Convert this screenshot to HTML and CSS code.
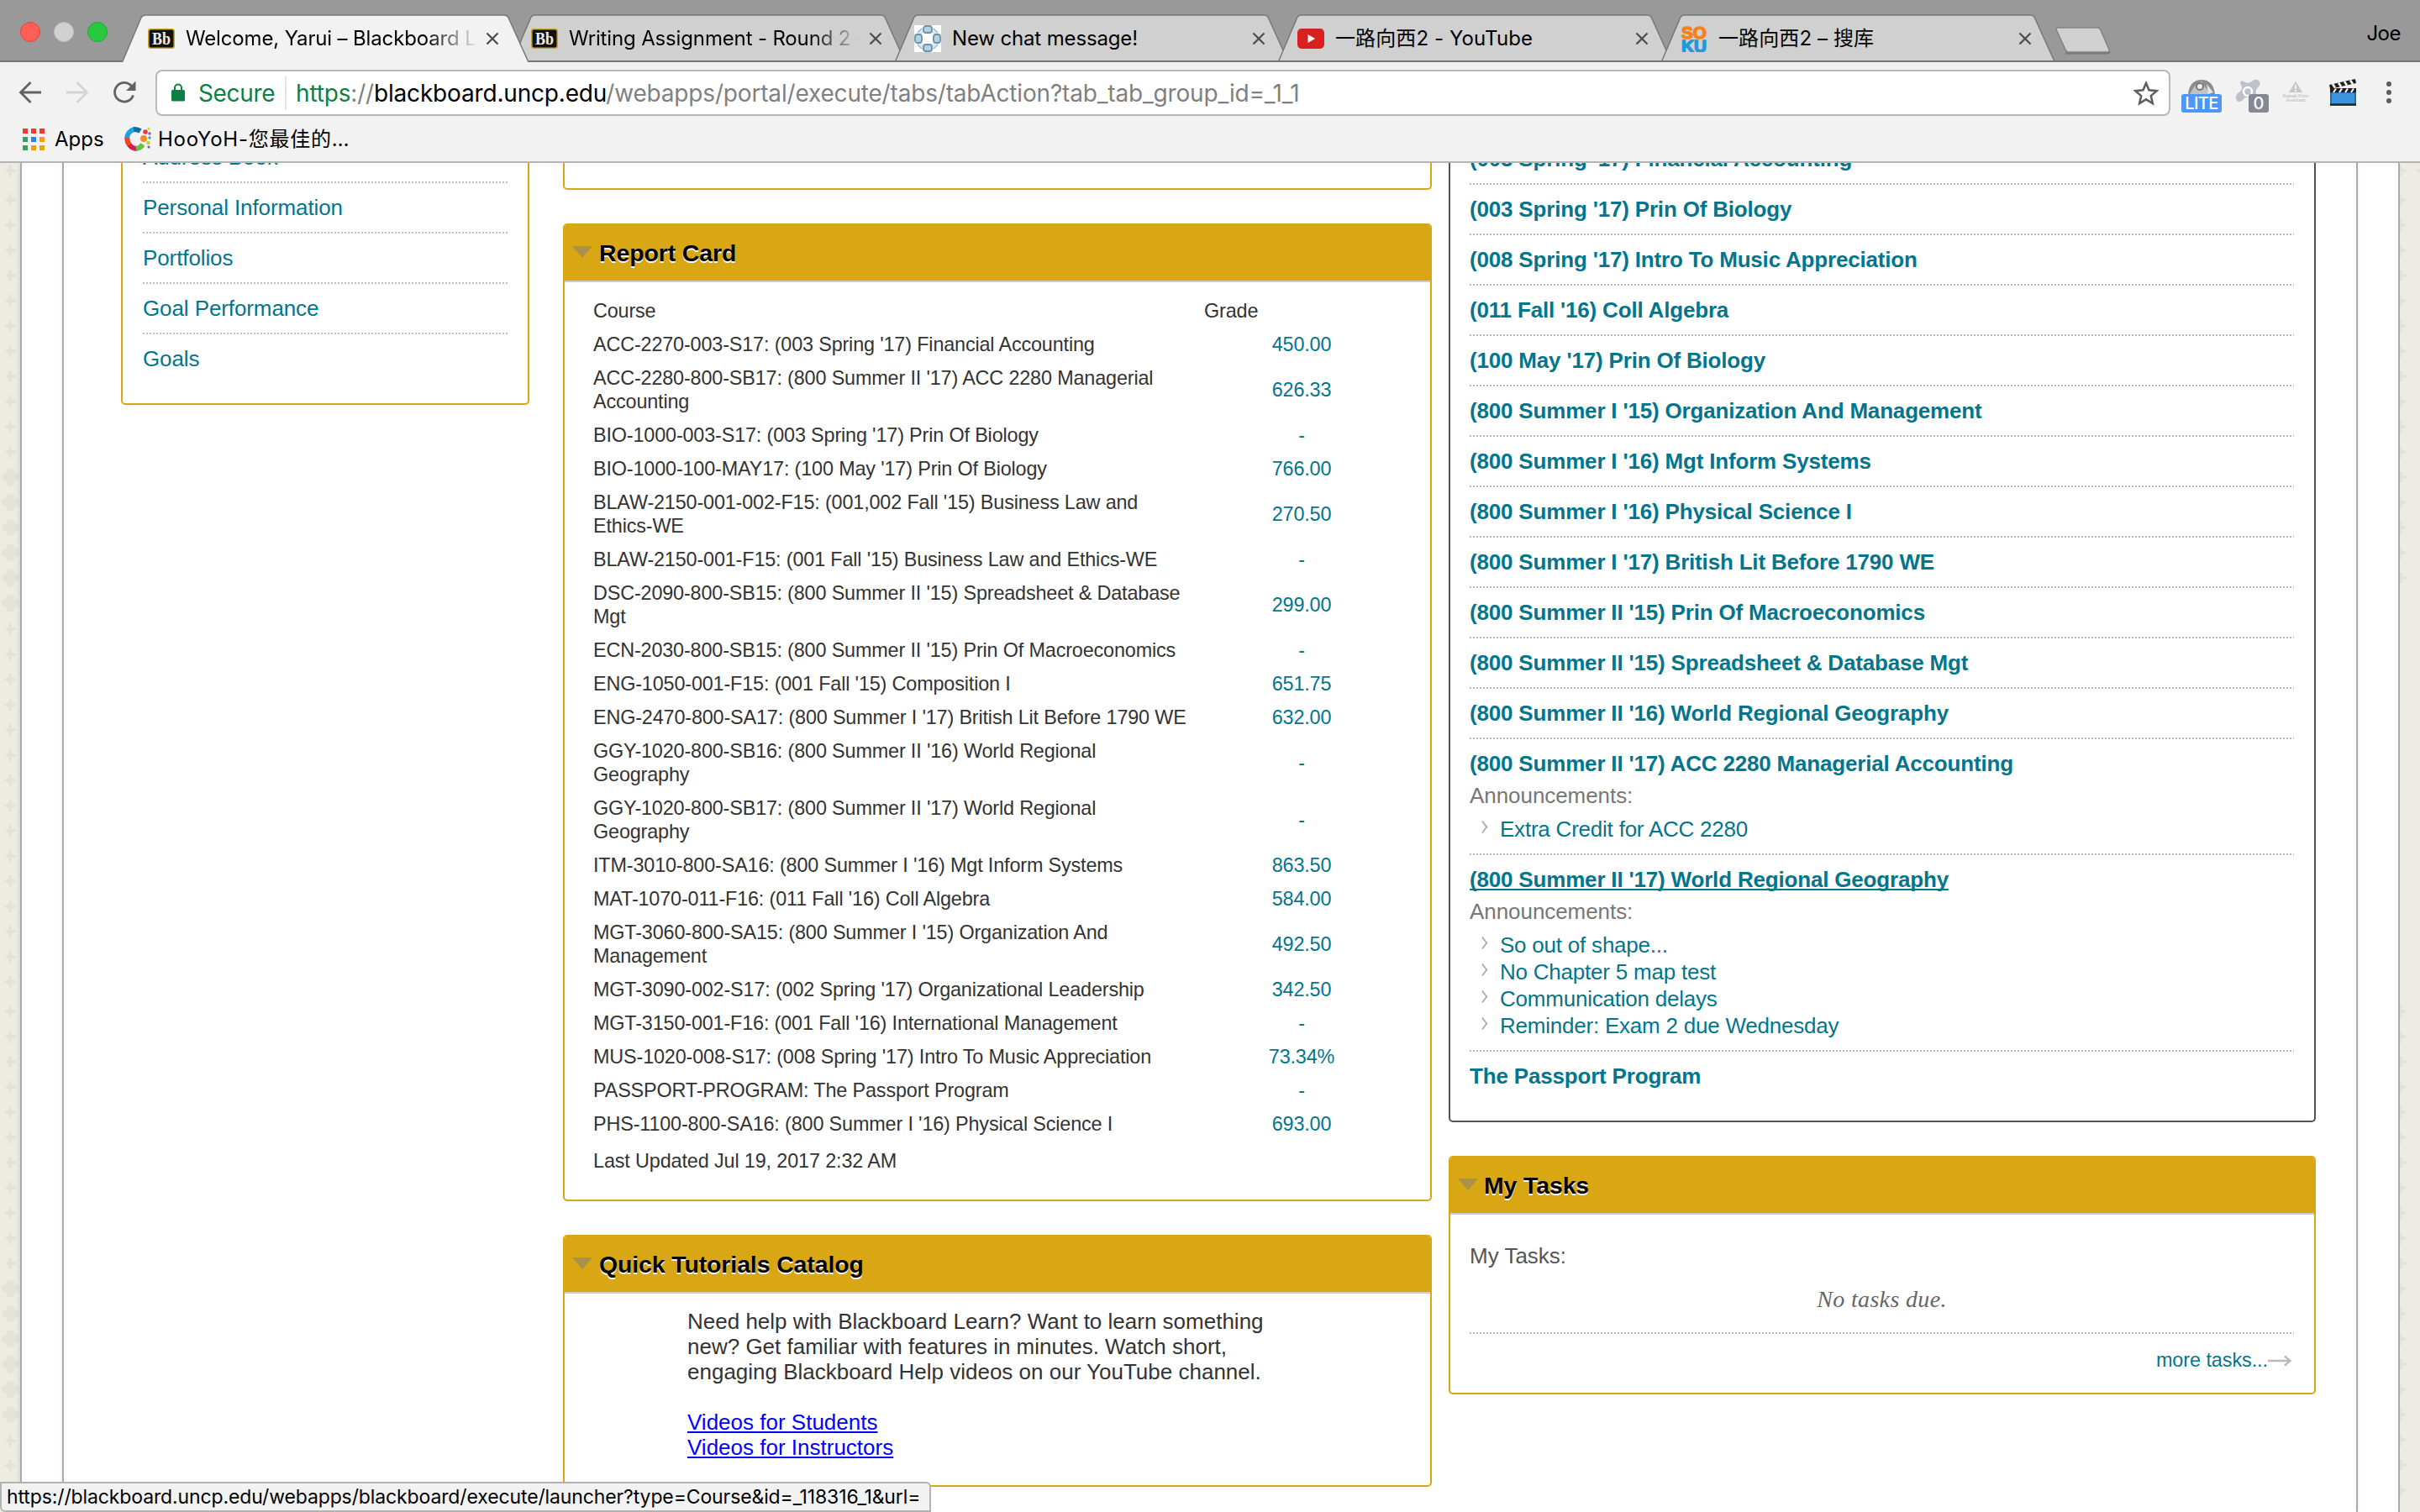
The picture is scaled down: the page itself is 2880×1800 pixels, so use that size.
FILE: index.html
```html
<!DOCTYPE html>
<html lang="en">
<head>
<meta charset="utf-8">
<title>Welcome, Yarui – Blackboard Learn</title>
<link rel="stylesheet" href="styles.css">
</head>
<body>
<svg class="defs" width="0" height="0" aria-hidden="true">
  <defs>
    <symbol id="tab-shape" viewBox="0 0 485 57">
      <path d="M0.5 57 L23 4 Q24.5 1 28 1 L455 1 Q458.500 1 460 4 L484 57"/>
    </symbol>
    <symbol id="close" viewBox="0 0 16 16"><path d="M1.500 1.500 L14.500 14.500 M14.500 1.500 L1.500 14.500" stroke="#4c4c4c" stroke-width="2.200" fill="none"/></symbol>
    <symbol id="bb" viewBox="0 0 32 24">
      <rect x="0.800" y="0.800" width="30.400" height="22.400" rx="2.500" fill="#111" stroke="#c9a227" stroke-width="1.600"/>
      <text x="16" y="18.500" text-anchor="middle" font-family="Liberation Serif, serif" font-size="20" font-weight="bold" fill="#eee" textLength="22" lengthAdjust="spacingAndGlyphs">Bb</text>
    </symbol>
    <symbol id="plus" viewBox="-8 -8 16 16"><path d="M-8 0 L-4 -2 L-1.800 -2 L-1.800 -4 Q-2.500 -6 0 -7.500 Q2.500 -6 1.800 -4 L1.800 -2 L4 -2 L8 0 L4 2 L1.800 2 L1.800 4 Q2.500 6 0 7.500 Q-2.500 6 -1.800 4 L-1.800 2 L-4 2 Z" fill="#e4e1d8"/></symbol>
    <pattern id="pluses" width="25" height="30" patternUnits="userSpaceOnUse"><use href="#plus" x="4.500" y="7" width="16" height="16"/></pattern>
    <pattern id="clovers" width="25" height="30" patternUnits="userSpaceOnUse">
      <g fill="#e5e2d9"><circle cx="7" cy="15" r="5"/><circle cx="18.500" cy="15" r="5"/><circle cx="12.700" cy="9.500" r="5"/><circle cx="12.700" cy="20.500" r="5"/><rect x="7" y="10" width="11.500" height="10"/></g>
    </pattern>
    <symbol id="caret" viewBox="0 0 24 14"><path d="M0 0 H24 L12 14 Z" fill="#a99149"/></symbol>
  </defs>
</svg>

<header class="chrome">
  <div class="tabstrip">
    <div class="lights"><i class="light red"></i><i class="light grey"></i><i class="light green"></i></div>
    <nav class="tabs">
      <div class="tab active">
        <svg class="shape"><use href="#tab-shape"/></svg>
        <svg class="fav" viewBox="0 0 32 24"><use href="#bb"/></svg>
        <span class="title fade">Welcome, Yarui – Blackboard Learn</span>
        <svg class="x"><use href="#close"/></svg>
      </div>
      <div class="tab">
        <svg class="shape"><use href="#tab-shape"/></svg>
        <svg class="fav" viewBox="0 0 32 24"><use href="#bb"/></svg>
        <span class="title fade">Writing Assignment - Round 2 -</span>
        <svg class="x"><use href="#close"/></svg>
      </div>
      <div class="tab">
        <svg class="shape"><use href="#tab-shape"/></svg>
        <svg class="fav tall" viewBox="0 0 32 32">
          <rect width="32" height="32" fill="#fff"/>
          <circle cx="16" cy="16" r="11.500" fill="none" stroke="#dcebf2" stroke-width="6"/>
          <g fill="#b5d3e2" stroke="#6b93aa" stroke-width="1.800"><rect x="11" y="1" width="10" height="8" rx="3"/><rect x="11" y="23" width="10" height="8" rx="3"/><rect x="1" y="11" width="8" height="10" rx="3"/><rect x="23" y="11" width="8" height="10" rx="3"/></g>
          <g fill="none" stroke="#a4bccb" stroke-width="1.500"><path d="M4 9 L9 4 M23 4 L28 9 M4 23 L9 28 M23 28 L28 23"/></g>
        </svg>
        <span class="title">New chat message!</span>
        <svg class="x"><use href="#close"/></svg>
      </div>
      <div class="tab">
        <svg class="shape"><use href="#tab-shape"/></svg>
        <svg class="fav" viewBox="0 0 32 24"><rect width="32" height="24" rx="5" fill="#d8201f"/><path d="M12.500 7 L21 12 L12.500 17 Z" fill="#fff"/></svg>
        <span class="title cjk">一路向西2 - YouTube</span>
        <svg class="x"><use href="#close"/></svg>
      </div>
      <div class="tab">
        <svg class="shape"><use href="#tab-shape"/></svg>
        <svg class="fav tall" viewBox="0 0 32 32" font-family="Liberation Sans, sans-serif" font-weight="bold" font-size="21" stroke-width="1.500">
          <text x="1" y="15.500" fill="#f5821f" stroke="#f5821f" textLength="30" lengthAdjust="spacingAndGlyphs">SO</text>
          <text x="1" y="31.500" fill="#1f9ad6" stroke="#1f9ad6" textLength="30" lengthAdjust="spacingAndGlyphs">KU</text>
        </svg>
        <span class="title cjk">一路向西2 – 搜库</span>
        <svg class="x"><use href="#close"/></svg>
      </div>
    </nav>
    <svg class="newtab" viewBox="0 0 66 33"><path d="M12 31.500 H62 Q65 31.500 64 29" stroke="#777" stroke-width="2" fill="none"/><path d="M3 1 H50 Q53 1 54 4 L64 27 Q65 30 61 30 H16 Q13 30 12 27 L1.500 4 Q0.500 1 3 1 Z" fill="#d0d0d0" stroke="#828282" stroke-width="1.500"/></svg>
    <span class="profile">Joe</span>
  </div>

  <div class="toolbar">
    <div class="navbtns">
      <svg width="28" height="28" viewBox="0 0 28 28" fill="none" stroke="#636363" stroke-width="2.800"><path d="M27 14 H3 M14.500 2 L2.500 14 L14.500 26"/></svg>
      <svg width="28" height="28" viewBox="0 0 28 28" fill="none" stroke="#d4d4d4" stroke-width="2.800"><path d="M1 14 H25 M13.500 2 L25.500 14 L13.500 26"/></svg>
      <svg width="28" height="28" viewBox="0 0 28 28" fill="none" stroke="#636363" stroke-width="2.800"><path d="M24.500 17.500 A11.300 11.300 0 1 1 22.500 6.500"/><path d="M27.500 0.500 V12 H16 Z" fill="#636363" stroke="none"/></svg>
    </div>
    <div class="omnibox">
      <svg class="lock" viewBox="0 0 16 22"><path d="M4 9 V5.500 A4 4 0 0 1 12 5.500 V9" fill="none" stroke="#0b8043" stroke-width="2"/><rect y="8" width="16" height="13.500" rx="1.500" fill="#0b8043"/></svg>
      <span class="secure">Secure</span>
      <i class="sep"></i>
      <span class="url"><b class="scheme">https</b>://<b class="host">blackboard.uncp.edu</b>/webapps/portal/execute/tabs/tabAction?tab_tab_group_id=_1_1</span>
      <svg class="star" viewBox="0 0 28 28"><path d="M14 2.800 L17.300 10.600 L25.800 11.300 L19.400 16.900 L21.300 25.200 L14 20.800 L6.700 25.200 L8.600 16.900 L2.200 11.300 L10.700 10.600 Z" fill="none" stroke="#5f5f5f" stroke-width="2.400"/></svg>
    </div>
    <div class="extensions">
      <span class="ext">
        <svg width="32" height="32" viewBox="0 0 32 32"><path d="M0 18 Q2 1 16 1 Q30 1 32 18 Z" fill="#8c8c8c"/><path d="M2 18 Q9 4 16 3 L26 18 Z" fill="#c2c2c2"/><circle cx="14" cy="9" r="4" fill="#efefef" stroke="#777" stroke-width="2"/><path d="M22 6 L30 16 L24 18 Z" fill="#e4e4e4"/></svg>
        <em class="badge lite">LITE</em>
      </span>
      <span class="ext">
        <svg width="32" height="32" viewBox="0 0 32 32"><path d="M6 5 Q6 1 10 3 Q16 7 21 2 Q26 -1 29 3 Q31 7 27 10 Q24 13 25 18 L20 24 Q14 20 11 23 Q6 29 2 26 Q-1 22 3 17 Q9 13 8 9 Z" fill="#bfc0ca"/><circle cx="15" cy="15" r="5" fill="none" stroke="#fff" stroke-width="2.500"/></svg>
        <em class="badge count">0</em>
      </span>
      <span class="ext">
        <svg width="32" height="32" viewBox="0 0 32 32"><path d="M16 2.500 L24 16 H8 Z" fill="#c8c8c8"/><path d="M16 7 V12 M16 13 V15" stroke="#f5f5f5" stroke-width="1.800"/><g font-family="Liberation Serif, serif" font-size="6" font-weight="bold" fill="#c4c4c4" text-anchor="middle"><text x="16" y="21.500" textLength="31" lengthAdjust="spacingAndGlyphs">Domain Error</text><text x="16" y="26.500" textLength="23" lengthAdjust="spacingAndGlyphs">Assistant</text></g></svg>
      </span>
      <span class="ext">
        <svg width="32" height="32" viewBox="0 0 32 32"><rect x="1" y="12" width="31" height="20" fill="#1d6cae"/><rect x="3" y="17" width="27" height="12" fill="#3b94dc"/><path d="M1 11 H32 V16 H1 Z" fill="#1d1d1d"/><path d="M0 7 L31 0 L32 5 L1 12 Z" fill="#222"/><path d="M4 6 L7 10.500 M11 4.500 L14 9 M18 3 L21 7.500 M25 1.500 L28 6" stroke="#fff" stroke-width="2.500"/><path d="M5 16 L8 11.500 M12 16 L15 11.500 M19 16 L22 11.500 M26 16 L29 11.500" stroke="#fff" stroke-width="2.200"/><path d="M1 30.500 H32" stroke="#222" stroke-width="2"/></svg>
      </span>
      <svg class="menu" viewBox="0 0 8 28" fill="#5c5c5c"><circle cx="4" cy="4" r="3"/><circle cx="4" cy="14" r="3"/><circle cx="4" cy="24" r="3"/></svg>
    </div>
  </div>

  <div class="bookmarks">
    <svg class="apps" viewBox="0 0 26 26"><g fill="#f0392f"><path d="M0 0h6v6H0zM10 0h6v6h-6zM20 0h6v6h-6z"/></g><path d="M0 10h6v6H0zM0 20h6v6H0z" fill="#31a35a"/><path d="M10 10h6v6h-6z" fill="#2188f3"/><path d="M20 10h6v6h-6zM10 20h6v6h-6zM20 20h6v6h-6z" fill="#efa10b"/></svg>
    <span class="bm">Apps</span>
    <svg class="hoo" viewBox="0 0 32 32" fill="none" stroke-width="6"><path d="M3 15 A11.500 11.500 0 0 1 12 4" stroke="#1ba5e0"/><path d="M11 4 A11.500 11.500 0 0 1 19 6" stroke="#0c6f9f"/><path d="M3.500 14 A11.500 11.500 0 0 0 6.500 23" stroke="#ee4823"/><path d="M6 22.500 A11.500 11.500 0 0 0 15 27" stroke="#d81b60"/><path d="M14 27 A11.500 11.500 0 0 0 22 22" stroke="#6cbf45"/><g stroke="none"><circle cx="23" cy="15" r="4" fill="#f58a1f"/><circle cx="25" cy="7" r="2.800" fill="#ea3a3a"/><circle cx="30" cy="9" r="1.800" fill="#9b4fb5"/><circle cx="28.500" cy="20" r="2.300" fill="#b9d532"/><circle cx="30" cy="14" r="1.700" fill="#29a9e1"/><circle cx="29" cy="3" r="1.500" fill="#c5d92d"/><circle cx="29" cy="25" r="1.500" fill="#8e44ad"/></g></svg>
    <span class="bm wide">HooYoH-您最佳的…</span>
  </div>
</header>

<main class="viewport">
  <svg class="edge" width="24" height="1606">
    <rect width="24" height="1606" fill="#eeebe3"/>
    <g transform="translate(0,-6)"><rect width="24" height="30" fill="url(#pluses)"/></g>
    <g transform="translate(0,29)"><rect width="24" height="330" fill="url(#pluses)"/></g>
    <g transform="translate(0,359)"><rect width="24" height="180" fill="url(#clovers)"/></g>
    <g transform="translate(0,540)"><rect width="24" height="450" fill="url(#pluses)"/></g>
    <g transform="translate(0,995)"><rect width="24" height="330" fill="url(#pluses)"/></g>
    <g transform="translate(0,1325)"><rect width="24" height="180" fill="url(#clovers)"/></g>
    <g transform="translate(0,1506)"><rect width="24" height="90" fill="url(#pluses)"/></g>
  </svg>
  <div class="page">
    <div class="content">
      <section class="col-left">
        <div class="module links">
          <a>Address Book</a><a>Personal Information</a><a>Portfolios</a><a>Goal Performance</a><a>Goals</a>
        </div>
      </section>

      <section class="col-mid">
        <div class="module stub"></div>
        <div class="module report">
          <h2><svg class="caret"><use href="#caret"/></svg>Report Card</h2>
          <table>
            <tr><th>Course</th><th>Grade</th></tr>
            <tr><td>ACC-2270-003-S17: (003 Spring '17) Financial Accounting</td><td>450.00</td></tr>
            <tr><td>ACC-2280-800-SB17: (800 Summer II '17) ACC 2280 Managerial<br>Accounting</td><td>626.33</td></tr>
            <tr><td>BIO-1000-003-S17: (003 Spring '17) Prin Of Biology</td><td>-</td></tr>
            <tr><td>BIO-1000-100-MAY17: (100 May '17) Prin Of Biology</td><td>766.00</td></tr>
            <tr><td>BLAW-2150-001-002-F15: (001,002 Fall '15) Business Law and<br>Ethics-WE</td><td>270.50</td></tr>
            <tr><td>BLAW-2150-001-F15: (001 Fall '15) Business Law and Ethics-WE</td><td>-</td></tr>
            <tr><td>DSC-2090-800-SB15: (800 Summer II '15) Spreadsheet &amp; Database<br>Mgt</td><td>299.00</td></tr>
            <tr><td>ECN-2030-800-SB15: (800 Summer II '15) Prin Of Macroeconomics</td><td>-</td></tr>
            <tr><td>ENG-1050-001-F15: (001 Fall '15) Composition I</td><td>651.75</td></tr>
            <tr><td>ENG-2470-800-SA17: (800 Summer I '17) British Lit Before 1790 WE</td><td>632.00</td></tr>
            <tr><td>GGY-1020-800-SB16: (800 Summer II '16) World Regional<br>Geography</td><td>-</td></tr>
            <tr><td>GGY-1020-800-SB17: (800 Summer II '17) World Regional<br>Geography</td><td>-</td></tr>
            <tr><td>ITM-3010-800-SA16: (800 Summer I '16) Mgt Inform Systems</td><td>863.50</td></tr>
            <tr><td>MAT-1070-011-F16: (011 Fall '16) Coll Algebra</td><td>584.00</td></tr>
            <tr><td>MGT-3060-800-SA15: (800 Summer I '15) Organization And<br>Management</td><td>492.50</td></tr>
            <tr><td>MGT-3090-002-S17: (002 Spring '17) Organizational Leadership</td><td>342.50</td></tr>
            <tr><td>MGT-3150-001-F16: (001 Fall '16) International Management</td><td>-</td></tr>
            <tr><td>MUS-1020-008-S17: (008 Spring '17) Intro To Music Appreciation</td><td>73.34%</td></tr>
            <tr><td>PASSPORT-PROGRAM: The Passport Program</td><td>-</td></tr>
            <tr><td>PHS-1100-800-SA16: (800 Summer I '16) Physical Science I</td><td>693.00</td></tr>
          </table>
          <p class="updated">Last Updated Jul 19, 2017 2:32 AM</p>
        </div>
        <div class="module tutorials">
          <h2><svg class="caret"><use href="#caret"/></svg>Quick Tutorials Catalog</h2>
          <p>Need help with Blackboard Learn? Want to learn something<br>new? Get familiar with features in minutes. Watch short,<br>engaging Blackboard Help videos on our YouTube channel.</p>
          <p><a>Videos for Students</a><br><a>Videos for Instructors</a></p>
        </div>
      </section>

      <section class="col-right">
        <div class="module courses">
          <div class="course"><a>(003 Spring '17) Financial Accounting</a></div>
          <div class="course"><a>(003 Spring '17) Prin Of Biology</a></div>
          <div class="course"><a>(008 Spring '17) Intro To Music Appreciation</a></div>
          <div class="course"><a>(011 Fall '16) Coll Algebra</a></div>
          <div class="course"><a>(100 May '17) Prin Of Biology</a></div>
          <div class="course"><a>(800 Summer I '15) Organization And Management</a></div>
          <div class="course"><a>(800 Summer I '16) Mgt Inform Systems</a></div>
          <div class="course"><a>(800 Summer I '16) Physical Science I</a></div>
          <div class="course"><a>(800 Summer I '17) British Lit Before 1790 WE</a></div>
          <div class="course"><a>(800 Summer II '15) Prin Of Macroeconomics</a></div>
          <div class="course"><a>(800 Summer II '15) Spreadsheet &amp; Database Mgt</a></div>
          <div class="course"><a>(800 Summer II '16) World Regional Geography</a></div>
          <div class="course"><a>(800 Summer II '17) ACC 2280 Managerial Accounting</a>
            <span class="label">Announcements:</span>
            <ul><li>Extra Credit for ACC 2280</li></ul></div>
          <div class="course"><a class="hover">(800 Summer II '17) World Regional Geography</a>
            <span class="label">Announcements:</span>
            <ul><li>So out of shape...</li><li>No Chapter 5 map test</li><li>Communication delays</li><li>Reminder: Exam 2 due Wednesday</li></ul></div>
          <div class="course"><a>The Passport Program</a></div>
        </div>
        <div class="module tasks">
          <h2><svg class="caret"><use href="#caret"/></svg>My Tasks</h2>
          <p class="task-label">My Tasks:</p>
          <p class="empty">No tasks due.</p>
          <p class="more">more tasks...<svg width="28" height="14" viewBox="0 0 28 14" fill="none" stroke="#b9b9b9" stroke-width="2.400"><path d="M0 7 H26 M20 1.500 L26.500 7 L20 12.500"/></svg></p>
        </div>
      </section>
    </div>
  </div>
  <svg class="edge right" width="24" height="1606">
    <rect width="24" height="1606" fill="#eeebe4"/>
    <g transform="translate(-12,-6)"><rect width="36" height="30" fill="url(#pluses)"/></g>
    <g transform="translate(-12,29)"><rect width="21" height="480" fill="url(#pluses)"/></g>
    <g transform="translate(-12,995)"><rect width="21" height="600" fill="url(#pluses)"/></g>
  </svg>
  <div class="status">https://blackboard.uncp.edu/webapps/blackboard/execute/launcher?type=Course&amp;id=_118316_1&amp;url=</div>
</main>
</body>
</html>
```
FILE: styles.css
```css
* { box-sizing: border-box; }
body {
  margin: 0;
  width: 2880px;
  height: 1800px;
  overflow: hidden;
  display: flex;
  flex-direction: column;
  background: #fff;
  color: #333;
  font-family: "Liberation Sans", Arial, sans-serif;
}
svg { display: block; flex: none; }
.defs { position: absolute; }
h2, p, ul { margin: 0; padding: 0; }
em, i { font-style: normal; }

/* Browser frame */
.chrome {
  flex: none;
  height: 194px;
  background: #f2f2f2;
  border-bottom: 2px solid #b4b4b4;
  color: #000;
  font-family: Inter, "Noto Sans CJK SC", sans-serif;
}
.tabstrip {
  height: 74px;
  display: flex;
  align-items: flex-start;
  background: linear-gradient(#999, #999 72px, #757575 72px);
}
.lights { display: flex; gap: 16px; width: 145px; padding: 26px 0 0 24px; }
.light { width: 24px; height: 24px; border-radius: 50%; border: 1px solid; }
.light.red { background: #ff5f57; border-color: #e2463f; }
.light.grey { background: #d0d0d0; border-color: #bebebe; }
.light.green { background: #28c940; border-color: #1dad2b; }
.tabs { display: flex; padding-top: 17px; }
.tab {
  position: relative;
  z-index: 0;
  isolation: isolate;
  width: 456px;
  height: 57px;
  display: flex;
  align-items: center;
  padding: 1px 0 0 31px;
}
.tab.active { z-index: 2; }
.shape {
  position: absolute;
  left: 0;
  top: 0;
  z-index: -1;
  width: 485px;
  height: 55px;
  fill: #d0d0d0;
  stroke: #777;
  stroke-width: 1.5px;
}
.active .shape { fill: #f2f2f2; height: 57px; }
.fav { width: 32px; height: 24px; margin-right: 13px; }
.fav.tall { height: 32px; }
.title {
  width: 346px;
  overflow: hidden;
  white-space: nowrap;
  font-size: 24px;
  line-height: 36px;
  letter-spacing: -0.15px;
  margin-right: 11px;
}
.title.cjk { letter-spacing: 0.1px; }
.title.fade {
  -webkit-mask-image: linear-gradient(90deg, #000 285px, transparent 348px);
  mask-image: linear-gradient(90deg, #000 285px, transparent 348px);
}
.x { width: 16px; height: 16px; }
.newtab { width: 66px; height: 33px; margin: 32px 0 0 21px; }
.profile { margin-left: auto; padding: 25px 23px 0 0; font-size: 24px; line-height: 30px; letter-spacing: -0.5px; }

.toolbar { height: 72px; display: flex; align-items: center; }
.navbtns { display: flex; gap: 28px; width: 185px; padding-left: 22px; }
.omnibox {
  width: 2398px;
  height: 55px;
  display: flex;
  align-items: center;
  padding: 1px 12px 0 17px;
  background: #fff;
  border: 2px solid #b8b8b8;
  border-radius: 8px;
}
.lock { width: 16px; height: 22px; margin: 0 16px 2px 0; }
.secure { width: 103px; color: #0b8043; font-size: 28px; letter-spacing: -0.35px; }
.sep { width: 2px; height: 40px; background: #e4e4e4; margin-right: 11px; }
.url { color: #808080; font-size: 28px; letter-spacing: -0.175px; }
.url b { font-weight: 400; }
.url .scheme { color: #0b8043; }
.url .host { color: #000; }
.star { width: 30px; height: 30px; margin-left: auto; }
.extensions { display: flex; align-items: center; padding-left: 21px; gap: 24px; }
.ext { position: relative; width: 32px; height: 32px; }
.badge {
  position: absolute;
  top: 18px;
  height: 22px;
  border-radius: 3px;
  color: #fff;
  font: 500 20px/23px Inter, sans-serif;
  text-align: center;
}
.badge.lite { left: -8px; width: 48px; background: #4d97f9; letter-spacing: -0.6px; }
.badge.count { left: 16px; width: 24px; background: #878894; }
.menu { width: 8px; height: 28px; margin-left: 11px; }

.bookmarks { height: 46px; display: flex; align-items: center; padding: 0 0 0 27px; margin-top: -3px; }
.apps { width: 26px; height: 26px; margin-right: 12px; }
.bm { font-size: 24px; line-height: 32px; width: 83px; white-space: nowrap; }
.bm.wide { width: auto; letter-spacing: 0.78px; }
.hoo { width: 32px; height: 32px; margin-right: 8px; }

/* Page */
.viewport { position: relative; flex: 1; display: flex; overflow: hidden; min-height: 0; }
.edge { height: 1606px; }
.page {
  width: 2832px;
  border: solid #aaa;
  border-width: 0 2px;
  padding: 0 48px;
  background: #fff;
  box-shadow: 0 0 6px #0002;
}
.content {
  height: 1606px;
  border: solid #aaa;
  border-width: 0 2px;
  box-shadow: 0 0 4px #0002;
  padding-left: 68px;
  display: flex;
  align-items: flex-start;
}
.col-left { width: 486px; margin-right: 40px; }
.col-mid { width: 1034px; margin-right: 20px; }
.col-right { width: 1032px; }
.module { border: 2px solid #d9a714; border-radius: 5px; background: #fff; overflow: hidden; }
.links, .stub, .courses { border-top: 0; border-top-left-radius: 0; border-top-right-radius: 0; }

h2 {
  display: flex;
  align-items: center;
  height: 68px;
  padding: 0 0 0 9px;
  background: #d9a714;
  border-bottom: 2px solid #ccc;
  color: #000;
  font-size: 28.400px;
  font-weight: 700;
  letter-spacing: -0.08px;
  text-shadow: 0 2px 0 #fff;
}
.caret { width: 24px; height: 14px; margin: -3px 8px 0 0; }
.tasks .caret { margin-right: 7px; }

.links a, .courses .course, .tasks .more {
  --dots: repeating-linear-gradient(90deg, #bdbdbd 0 2px, transparent 2px 4px);
}
.links { height: 288px; padding: 0 24px; }
.links a {
  display: block;
  height: 60px;
  padding-top: 14px;
  color: #04758c;
  font-size: 26px;
  line-height: 30px;
  letter-spacing: -0.1px;
  background: var(--dots) left bottom / 100% 2px no-repeat;
}
.links a:first-child { margin-top: -36px; }
.links a:last-child { background: none; }

.stub { height: 32px; }
.report { height: 1164px; margin-top: 40px; }
table {
  margin: 14px 0 0 34px;
  border-collapse: collapse;
  font-size: 23.400px;
  line-height: 28px;
  letter-spacing: -0.155px;
}
td, th { padding: 6px 0; text-align: left; font-weight: 400; white-space: nowrap; }
td:first-child, th:first-child { width: 727px; }
td:last-child { width: 232px; text-align: center; color: #04758c; }
.updated { margin: 10px 0 0 34px; font-size: 23.400px; line-height: 28px; letter-spacing: -0.130px; }

.tutorials { height: 300px; margin-top: 40px; }
.tutorials p { margin: 18px 0 0 146px; font-size: 26px; line-height: 30px; letter-spacing: 0; }
.tutorials p + p { margin-top: 30px; }
.tutorials a { color: #00f; text-decoration: underline; text-decoration-thickness: 2px; text-underline-offset: 2px; }

.courses { height: 1142px; padding: 0 24px 0 23px; border-color: #505255; }
.course {
  padding: 14px 0 16px;
  font-size: 26px;
  line-height: 30px;
  background: var(--dots) left bottom / 100% 2px no-repeat;
}
.course:first-child { margin-top: -34px; }
.course:last-child { background: none; }
.course > a { display: block; width: max-content; color: #04758c; font-weight: 700; letter-spacing: -0.180px; }
.course .hover { text-decoration: underline; text-decoration-thickness: 2px; text-underline-offset: 2px; text-decoration-skip-ink: none; }
.label { display: block; margin-top: 8px; color: #777; letter-spacing: -0.06px; }
.course ul { list-style: none; margin: 9px 0 -1px; line-height: 32px; }
.course li {
  position: relative;
  color: #04758c;
  letter-spacing: -0.220px;
  padding-left: 36px;
}
.course li::before {
  content: "";
  position: absolute;
  left: 10px;
  top: 8px;
  width: 9px;
  height: 9px;
  border: solid #aaa;
  border-width: 2.500px 2.500px 0 0;
  transform: scaleX(.75) rotate(45deg);
}

.tasks { height: 284px; margin-top: 40px; }
.tasks p { margin: 0 24px 0 23px; font-size: 26px; line-height: 30px; }
.tasks .task-label { padding-top: 34px; color: #555; }
.tasks .empty {
  margin-top: 22px;
  padding-bottom: 24px;
  text-align: center;
  color: #666;
  font: italic 28px/30px "Liberation Serif", serif;
  letter-spacing: 0.350px;
}
.tasks .more {
  display: flex;
  justify-content: flex-end;
  align-items: flex-start;
  padding: 18px 3px 0 0;
  height: 52px;
  color: #04758c;
  font-size: 23.400px;
  letter-spacing: -0.060px;
  background: var(--dots) left top / 100% 2px no-repeat;
}
.more svg { margin-top: 9px; }

.status {
  position: absolute;
  left: 0;
  bottom: 0;
  width: 1108px;
  height: 36px;
  padding-left: 6px;
  background: #f2f2f2;
  border: 2px solid #b2b2b2;
  border-radius: 0 6px 0 6px;
  color: #000;
  font: 23px/33px Inter, sans-serif;
  letter-spacing: -0.120px;
  white-space: nowrap;
}
```
